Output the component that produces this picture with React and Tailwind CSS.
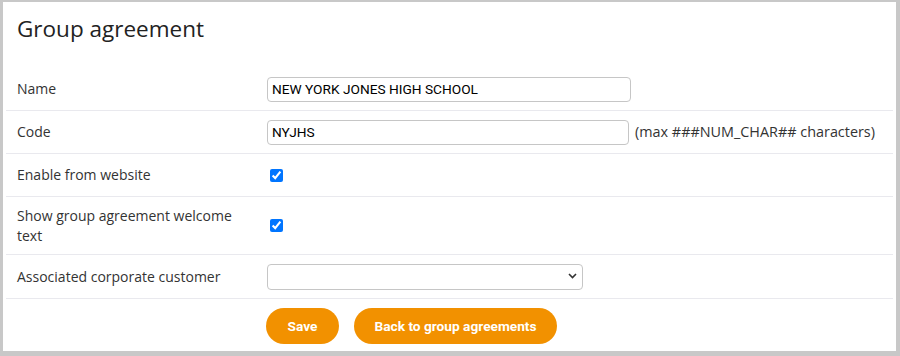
import { useState } from 'react';

const labelFont = { fontFamily: '"Open Sans", "DejaVu Sans", sans-serif' };
const fieldFont = { fontFamily: 'Roboto, "Liberation Sans", sans-serif' };

function Row({ label, children, className = '' }) {
  return (
    <div className={`flex items-center border-b border-[#e9e9ee] ${className}`}>
      <div className="w-[250px] shrink-0 pl-[11px] pr-[14px] text-[14px] leading-[20px] text-[#333]">
        {label}
      </div>
      <div className="flex items-center pl-[11px]">{children}</div>
    </div>
  );
}

export default function App() {
  const [name, setName] = useState('NEW YORK JONES HIGH SCHOOL');
  const [code, setCode] = useState('NYJHS');
  const [enabled, setEnabled] = useState(true);
  const [showText, setShowText] = useState(true);

  return (
    <div
      className="w-[900px] h-[356px] bg-white border-[#c8c8c8] border-l-[3px] border-t-[2px] border-r-[4px] border-b-[5px] px-[3px]"
      style={labelFont}
    >
      <h1 className="pl-[11px] pt-[12px] h-[66px] text-[22.5px] leading-[30px] text-[#222]">
        Group agreement
      </h1>

      <div>
        <Row label="Name" className="h-[43px]">
          <input
            value={name}
            onChange={(e) => setName(e.target.value)}
            className="w-[364px] h-[25px] rounded-[4px] border border-[#c6c6c6] px-[4px] text-[13.7px] text-black outline-none"
            style={fieldFont}
          />
        </Row>
        <Row label="Code" className="h-[43px]">
          <input
            value={code}
            onChange={(e) => setCode(e.target.value)}
            className="w-[362px] h-[25px] rounded-[4px] border border-[#c6c6c6] px-[4px] text-[13.7px] text-black outline-none"
            style={fieldFont}
          />
          <span className="ml-[6px] text-[14.4px] text-[#333]">(max ###NUM_CHAR## characters)</span>
        </Row>
        <Row label="Enable from website" className="h-[43px]">
          <input
            type="checkbox"
            checked={enabled}
            onChange={() => setEnabled(!enabled)}
            className="ml-[3px] w-[13px] h-[13px] accent-[#0075ff]"
          />
        </Row>
        <Row label="Show group agreement welcome text" className="h-[58px]">
          <input
            type="checkbox"
            checked={showText}
            onChange={() => setShowText(!showText)}
            className="ml-[3px] w-[13px] h-[13px] accent-[#0075ff]"
          />
        </Row>
        <Row label="Associated corporate customer" className="h-[44px]">
          <div className="relative">
            <select className="appearance-none w-[316px] h-[26px] rounded-[4px] border border-[#c6c6c6] bg-white px-[5px] text-[13px] outline-none">
              <option value=""></option>
            </select>
            <svg
              className="pointer-events-none absolute right-[6px] top-[10px]"
              width="9"
              height="6"
              viewBox="0 0 9 6"
              fill="none"
            >
              <path d="M1 1l3.5 3.5L8 1" stroke="#333" strokeWidth="1.6" />
            </svg>
          </div>
        </Row>

        <div className="flex gap-[15px] pl-[260px] pt-[9px]">
          <button
            className="h-[36px] w-[73px] rounded-full bg-[#f29100] text-[13.7px] font-bold text-white"
            style={fieldFont}
          >
            Save
          </button>
          <button
            className="h-[36px] w-[203px] rounded-full bg-[#f29100] text-[13.7px] font-bold text-white"
            style={fieldFont}
          >
            Back to group agreements
          </button>
        </div>
      </div>
    </div>
  );
}
